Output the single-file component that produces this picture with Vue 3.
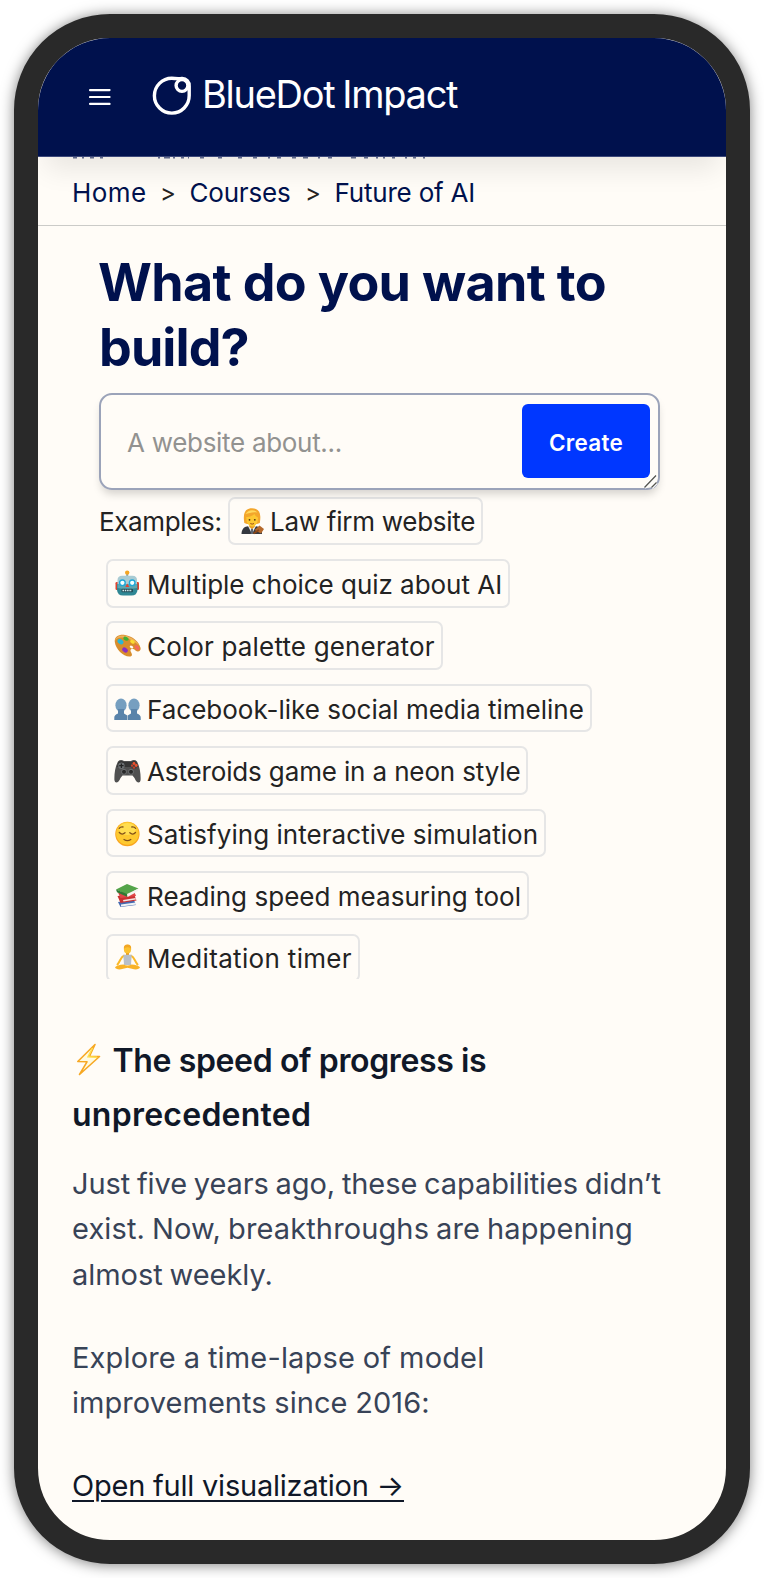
<script setup>
const crumbs = [
  { text: 'Home', cls: 'c-home' },
  { text: 'Courses', cls: 'c-courses' },
  { text: 'Future of AI', cls: 'c-future' },
]
const examples = [
  { icon: 'judge', text: 'Law firm website', ls: -0.26, lead: true },
  { icon: 'robot', text: 'Multiple choice quiz about AI', ls: -0.03 },
  { icon: 'palette', text: 'Color palette generator', ls: 0.16 },
  { icon: 'people', text: 'Facebook-like social media timeline', ls: 0 },
  { icon: 'gamepad', text: 'Asteroids game in a neon style', ls: -0.14 },
  { icon: 'relieved', text: 'Satisfying interactive simulation', ls: 0.05 },
  { icon: 'books', text: 'Reading speed measuring tool', ls: 0.03 },
  { icon: 'lotus', text: 'Meditation timer', ls: 0.33 },
]
const first = [
  { text: 'Just five years ago, these capabilities didn’t', ls: -0.08 },
  { text: 'exist. Now, breakthroughs are happening', ls: 0.12 },
  { text: 'almost weekly.', ls: -0.03 },
]
const second = [
  { text: 'Explore a time-lapse of model', ls: 0.16 },
  { text: 'improvements since 2016:', ls: 0.05 },
]
</script>

<template>
  <div class="page">
    <div class="device">
      <header class="bar">
        <svg class="menu" width="22" height="18" viewBox="0 0 22 18">
          <path d="M1 2.1H20.6M1 9H20.6M1 15.9H20.6" stroke="#fff" stroke-width="2.1" stroke-linecap="round" />
        </svg>
        <svg class="mark" width="40" height="40" viewBox="0 0 40 40" fill="none" stroke="#fff" stroke-width="3.4">
          <path d="M37.2 11V20.6A17.4 17.4 0 1 1 19.8 3.3C23 3.3 25 4 30 3.4A7 7 0 0 1 37.2 11Z" stroke-linejoin="round" />
          <circle cx="30" cy="10.5" r="5.9" />
        </svg>
        <span class="brand">BlueDot Impact</span>
      </header>

      <nav class="crumbs">
        <svg class="sliver" width="360" height="2" viewBox="0 0 360 2">
          <path d="M1 .7H5M10 .7H12M18 .7H22M28 .7H31M86 .7H88M92 .7H98M101 .7H103M109 .7H112M116 .7H117M128 .7H132M146 .7H150M166 .7H170M181 .7H185M196 .7H198M205 .7H209M220 .7H224M231 .7H236M246 .7H248M256 .7H260M279 .7H284M292 .7H296M304 .7H306M311 .7H313M320 .7H323M333 .7H335M341 .7H344M351 .7H353" stroke="#001150" stroke-opacity=".6" stroke-width="1.4" />
        </svg>
        <template v-for="(c, i) in crumbs" :key="c.text">
          <span v-if="i" class="sep">&gt;</span>
          <a :class="['crumb', c.cls]">{{ c.text }}</a>
        </template>
      </nav>

      <main>
        <section class="builder">
          <h1><span class="t1">What do you want to</span><br /><span class="t2">build?</span></h1>
          <div class="field">
            <span class="ph">A website about...</span>
            <button>Create</button>
            <svg class="grip" width="15" height="15" viewBox="0 0 15 15">
              <path d="M1.5 13.5L13 1.5M8.5 13.5L13.5 8.5" stroke="#fff" stroke-width="3.4" />
              <path d="M1.5 13.5L13 1.5M8.5 13.5L13.5 8.5" stroke="#55554f" stroke-width="1.3" />
            </svg>
          </div>
          <div class="examples">
            <div v-for="e in examples" :key="e.text" class="row" :class="{ lead: e.lead }">
              <span v-if="e.lead" class="label">Examples:</span>
              <span class="chip">
                <svg class="ico" :class="e.icon" width="27" height="27" viewBox="0 0 27 27">
                  <g v-if="e.icon === 'judge'">
                    <path d="M2.5 26C2.5 20.5 6 18.5 9 18.3H17C20 18.6 23 20.5 23 26Z" fill="#34383f" />
                    <path d="M9 18L13 26L17 18Z" fill="#eef1f4" />
                    <path d="M12 20.5H14L14.3 26H11.7Z" fill="#5d6570" />
                    <path d="M10.3 15H15.7V19L13 21L10.3 19Z" fill="#e99b1d" />
                    <path d="M5.3 15C3.5 4 7 .3 13 .3C20 .3 22.5 5 20.8 15L18 16H8Z" fill="#f3a62b" />
                    <path d="M7.3 9C9 9 13 8.5 15.5 6C16 8 18 9 19 9.5C19.3 15 16.5 18.5 13.2 18.5C9.8 18.5 7 15 7.3 9Z" fill="#fdc832" />
                    <path d="M6.5 6C9 1.5 15 1 18.5 4.5C14 3.5 10 5 6.5 6Z" fill="#ffd95c" />
                    <circle cx="10.5" cy="11.8" r=".9" fill="#53320d" /><circle cx="15.8" cy="11.8" r=".9" fill="#53320d" />
                    <path d="M11.3 15.5Q13.2 16.8 15 15.5" stroke="#a04e18" fill="none" />
                    <path d="M15.5 22L20.5 17.5L25 21L22 25.5Z" fill="#b5692b" /><path d="M14.5 25.5L20 22" stroke="#8a4717" stroke-width="2" />
                  </g>
                  <g v-else-if="e.icon === 'robot'">
                    <rect x="1.5" y="12" width="3" height="8" rx="1.2" fill="#dd4430" /><rect x="22" y="12" width="3" height="8" rx="1.2" fill="#dd4430" />
                    <rect x="12.2" y="2" width="2" height="5" fill="#8aa0a8" /><circle cx="13.2" cy="2.6" r="2.2" fill="#f5a623" />
                    <path d="M3.5 10Q3.5 6 8 5.8H18.5Q23 6 23 10V16H3.5Z" fill="#a9cbd3" />
                    <path d="M3 14H23.5V20Q23 25.5 17.5 25.5H9Q3.5 25.5 3 20Z" fill="#2f8794" />
                    <path d="M3.5 14H23V18Q13 20 3.5 18Z" fill="#5ea6b0" />
                    <circle cx="8.4" cy="12.8" r="3.5" fill="#20a8d8" /><circle cx="18.2" cy="12.8" r="3.5" fill="#20a8d8" />
                    <circle cx="8.4" cy="12.8" r="2.1" fill="#f3ffff" /><circle cx="18.2" cy="12.8" r="2.1" fill="#f3ffff" />
                    <path d="M13.3 13.5L15.3 17H11.3Z" fill="#e8402d" />
                    <rect x="7.5" y="18.8" width="11.5" height="3.4" rx="1" fill="#234e59" /><path d="M8.5 20.5H18" stroke="#d7eef0" stroke-width="1.4" stroke-dasharray="1.5 .8" />
                  </g>
                  <g v-else-if="e.icon === 'palette'">
                    <path d="M.8 10C.2 4.5 5 2.3 11 3C19 4.3 25 10 26.6 16C27 19 24 20.5 21.5 18.5C19.5 16.5 16 16.5 16.5 19C17.2 21 19.5 23.5 16.5 24.5C10 25.5 1.8 17.5.8 10Z" fill="#d88d2c" />
                    <path d="M1.2 9C1 5 6 3 11 3.7C18 5 23 9 25.5 14C20 8 12 5.5 7 5.5C4 5.5 2 7 1.2 9Z" fill="#efb35a" />
                    <ellipse cx="6.5" cy="9.6" rx="3.2" ry="2.4" transform="rotate(35 6.5 9.6)" fill="#28b6d8" />
                    <ellipse cx="12" cy="6.7" rx="2.8" ry="1.9" transform="rotate(20 12 6.7)" fill="#3fb032" />
                    <ellipse cx="18.5" cy="9.8" rx="2.5" ry="1.7" transform="rotate(30 18.5 9.8)" fill="#fbdc31" />
                    <ellipse cx="23" cy="15.6" rx="2.9" ry="1.8" transform="rotate(45 23 15.6)" fill="#f4685b" />
                    <ellipse cx="11" cy="18" rx="3" ry="2.2" transform="rotate(35 11 18)" fill="#8a2fc0" />
                    <ellipse cx="17.5" cy="15" rx="1.9" ry="1.3" transform="rotate(35 17.5 15)" fill="#fffcf7" />
                  </g>
                  <g v-else-if="e.icon === 'people'" fill="#5a84aa">
                    <ellipse cx="7" cy="10.2" rx="5.6" ry="6.8" fill="#769fc0" /><ellipse cx="20" cy="10.2" rx="5.6" ry="6.8" fill="#769fc0" />
                    <path d="M4 14H10V18.5L13.3 20.5V25H.3V22.5Q.3 20 4 18.5Z" />
                    <path d="M23 14H17V18.5L13.7 20.5V25H26.7V22.5Q26.7 20 23 18.5Z" />
                  </g>
                  <g v-else-if="e.icon === 'gamepad'">
                    <path d="M4 4.5Q6.5 2 10 4H17Q20.5 2 23 4.5C26 10 26.8 17 26.6 23C26 27 22.5 26.2 20.5 21L18.5 18.5H8.5L6.5 21C4.5 26.2 1 27 .4 23C.2 17 1 10 4 4.5Z" fill="#505050" />
                    <path d="M4.5 5Q7 3.2 10 5H17Q20 3.2 22.5 5L24 10H3Z" fill="#353535" />
                    <circle cx="7.4" cy="8.7" r="3.2" fill="#6c7073" /><path d="M7.4 6.5V11M5.2 8.7H9.6" stroke="#232323" stroke-width="1.3" />
                    <circle cx="20" cy="8.7" r="3.2" fill="#4a4040" />
                    <circle cx="20" cy="6.5" r="1.4" fill="#f0522e" /><circle cx="22.2" cy="8.5" r="1.4" fill="#f0522e" /><circle cx="18" cy="8.7" r="1.1" fill="#c74029" /><circle cx="20" cy="10.7" r="1.1" fill="#c74029" />
                    <circle cx="10" cy="14.8" r="2.5" fill="#292929" stroke="#777b7e" stroke-width=".8" /><circle cx="17" cy="14.8" r="2.5" fill="#292929" stroke="#777b7e" stroke-width=".8" />
                  </g>
                  <g v-else-if="e.icon === 'relieved'">
                    <circle cx="13.4" cy="14" r="12.2" fill="#f9a51f" /><circle cx="13.4" cy="13.4" r="11.3" fill="#fdc930" /><ellipse cx="13.4" cy="9" rx="8.5" ry="6" fill="#ffdd51" />
                    <path d="M5.3 12.5Q8 15.5 11 12.8M15.8 12.8Q18.8 15.5 21.5 12.5M10 19.5Q13.4 21.8 16.8 19.5M5.2 8.3Q6.5 6.6 9 7M21.6 8.3Q20.3 6.6 17.8 7" fill="none" stroke="#81501a" stroke-width="1.3" stroke-linecap="round" />
                  </g>
                  <g v-else-if="e.icon === 'books'">
                    <path d="M4 20L6.5 25L22 23L20 18Z" fill="#456ab0" /><path d="M7 22.5L21.5 20.5L22.5 22.5L7 24.5Z" fill="#eef2f4" />
                    <path d="M3.5 14L6.5 21L22.5 18.5L20 12Z" fill="#ca3031" /><path d="M9 18L21.5 16L22 17.5L9.5 19.5Z" fill="#f4e4df" />
                    <path d="M4 10.5L6.5 16L22 14L20 9Z" fill="#e04747" />
                    <path d="M2 7.5L13 12.5L24.5 6.5L13 2Z" fill="#54a449" /><path d="M2 7.5L13 12L13.5 15L3 10.3Z" fill="#2d7a35" /><path d="M13 12L24.5 6.5L24 9.3L13.5 15Z" fill="#f4f5ef" />
                  </g>
                  <g v-else>
                    <path d="M12 8H15V11H12Z" fill="#e9991b" />
                    <ellipse cx="13.5" cy="5.2" rx="3.6" ry="4.4" fill="#fcc22f" /><path d="M9.9 5Q9.3 .8 13.5 .6Q17.7 .8 17.1 5Q16 3 13.5 3.2Q11 3 9.9 5Z" fill="#f2a624" />
                    <path d="M10 11.8C6.5 13 6.5 17 3.5 20.5M17 11.8C20.5 13 20.5 17 23.5 20.5" fill="none" stroke="#fbb928" stroke-width="2" stroke-linecap="round" />
                    <path d="M9.3 10.8H17.7L17 21H10Z" fill="#b8bfc8" />
                    <path d="M1 23.3Q3 21 9.5 20.5Q13.5 22.5 17.5 20.5Q24 21 26 23.3Q25 25.8 20 25.3L13.5 23.8L7 25.3Q2 25.8 1 23.3Z" fill="#f8b227" />
                  </g>
                </svg>
                <span class="txt" :style="{ letterSpacing: e.ls + 'px' }">{{ e.text }}</span>
              </span>
            </div>
          </div>
        </section>

        <section class="article">
          <h2>
            <svg class="bolt" width="27" height="35" viewBox="0 0 27 35">
              <path d="M20 2.5L2.8 19.5L12 19.8L4.5 32.5L24.5 14.5L14.5 14.2Z" fill="#fffae0" stroke="#f7a823" stroke-width="1.6" stroke-linejoin="round" />
              <path d="M17.5 6L13 14.8L22 15.2" fill="none" stroke="#ffdf4e" stroke-width="1.5" />
            </svg><span class="h-a">The speed of progress is</span><br /><span class="h-b">unprecedented</span>
          </h2>
          <p class="p1"><span v-for="l in first" :key="l.text" class="line" :style="{ letterSpacing: l.ls + 'px' }">{{ l.text }}</span></p>
          <p class="p2"><span v-for="l in second" :key="l.text" class="line" :style="{ letterSpacing: l.ls + 'px' }">{{ l.text }}</span></p>
          <p class="p3"><a>Open full visualization →</a></p>
        </section>
      </main>
    </div>
  </div>
</template>

<style>
body { background: #fff; }
</style>

<style scoped>
* { box-sizing: border-box; }
.page {
  height: 1578px;
  padding: 14px;
  overflow: hidden;
  font-family: Inter, "Liberation Sans", sans-serif;
  white-space: nowrap;
}
.device {
  height: 1550px;
  border: 24px solid #292929;
  border-radius: 96px;
  overflow: hidden;
  background: #fffcf7;
  box-shadow: 0 1px 14px rgba(0, 0, 0, 0.5);
}
.bar {
  position: relative;
  z-index: 1;
  display: flex;
  align-items: center;
  height: 119px;
  padding: 0 0 7px 50.5px;
  background: #00114d;
  border-bottom: 1px solid #3c487a;
  box-shadow: 0 20px 26px -8px rgba(0, 0, 0, 0.09);
  color: #fff;
}
.menu { margin-top: 6px; }
.mark { margin: 2px 0 0 41.5px; }
.brand { margin: 1.5px 0 0 10px; font-size: 38px; font-weight: 400; letter-spacing: -1.28px; word-spacing: -1.5px; }
.crumbs {
  position: relative;
  display: flex;
  align-items: center;
  height: 69px;
  padding: 2px 0 0 34px;
  border-bottom: 1.5px solid #cbcbc8;
  font-size: 26px;
  color: #232323;
}
.sliver { position: absolute; left: 34px; top: 0; }
.crumb { color: #00114d; }
.c-home { width: 74px; letter-spacing: 0.4px; }
.c-courses { width: 101.5px; letter-spacing: -0.2px; }
.c-future { letter-spacing: -0.2px; }
.sep { width: 14px; margin: 0 15.5px 0 14px; font-size: 24px; }
.builder { padding: 23.6px 0 0 60px; }
h1 { margin: 0; font-size: 52px; line-height: 65px; font-weight: 700; color: #00114d; }
.t1 { letter-spacing: -0.65px; }
.t2 { letter-spacing: -0.9px; margin-left: 1px; }
.field {
  position: relative;
  display: flex;
  align-items: center;
  justify-content: space-between;
  width: 560.5px;
  height: 97px;
  margin: 13px 0 0 1px;
  padding: 0 8px 0 26px;
  border: 2px solid #9ba3b9;
  border-radius: 13px;
  box-shadow: 0 6px 9px -2px rgba(0, 0, 0, 0.17);
}
.ph { margin-top: 3px; font-size: 26px; letter-spacing: -0.3px; color: #929290; }
button {
  width: 128px;
  height: 74px;
  padding: 2px 0 0 1px;
  border: 0;
  border-radius: 6px;
  background: #0037ff;
  color: #fff;
  font: 600 22.5px Inter, sans-serif;
  letter-spacing: 0.25px;
}
.grip { position: absolute; right: 0; bottom: -1px; }
.examples { height: 489.2px; overflow: hidden; font-size: 26px; color: #232323; }
.row { display: flex; align-items: center; height: 62.46px; padding-left: 7.5px; }
.row.lead { padding-left: 1px; }
.label { width: 129px; padding-top: 2px; letter-spacing: -0.35px; }
.chip {
  display: flex;
  align-items: center;
  height: 48.5px;
  padding: 0 6px 0 6px;
  border: 2px solid #e6e6e6;
  border-radius: 7px;
}
.ico { margin: 0 6.5px 0 0; }
.ico.judge { margin: 2px 4.5px 0 2.5px; }
.txt { padding-top: 2px; }
.article { padding: 55px 0 0 34px; font-size: 29px; color: #384357; }
h2 { margin: 0; font-size: 32px; line-height: 54px; font-weight: 600; color: #101828; }
.bolt { display: inline-block; vertical-align: -5px; margin: 0 10.5px 0 3px; }
.h-a { letter-spacing: -0.37px; }
.h-b { letter-spacing: 0.25px; }
p { margin: 0; line-height: 45.4px; }
.line { display: block; }
.p1 { margin-top: 19.3px; word-spacing: -1.3px; }
.p2 { margin-top: 37.6px; word-spacing: -0.5px; line-height: 45px; }
.p3 { margin-top: 38px; color: #101828; letter-spacing: -0.22px; }
.p3 a { text-decoration: underline; text-decoration-thickness: 2px; text-underline-offset: 4px; }
</style>
